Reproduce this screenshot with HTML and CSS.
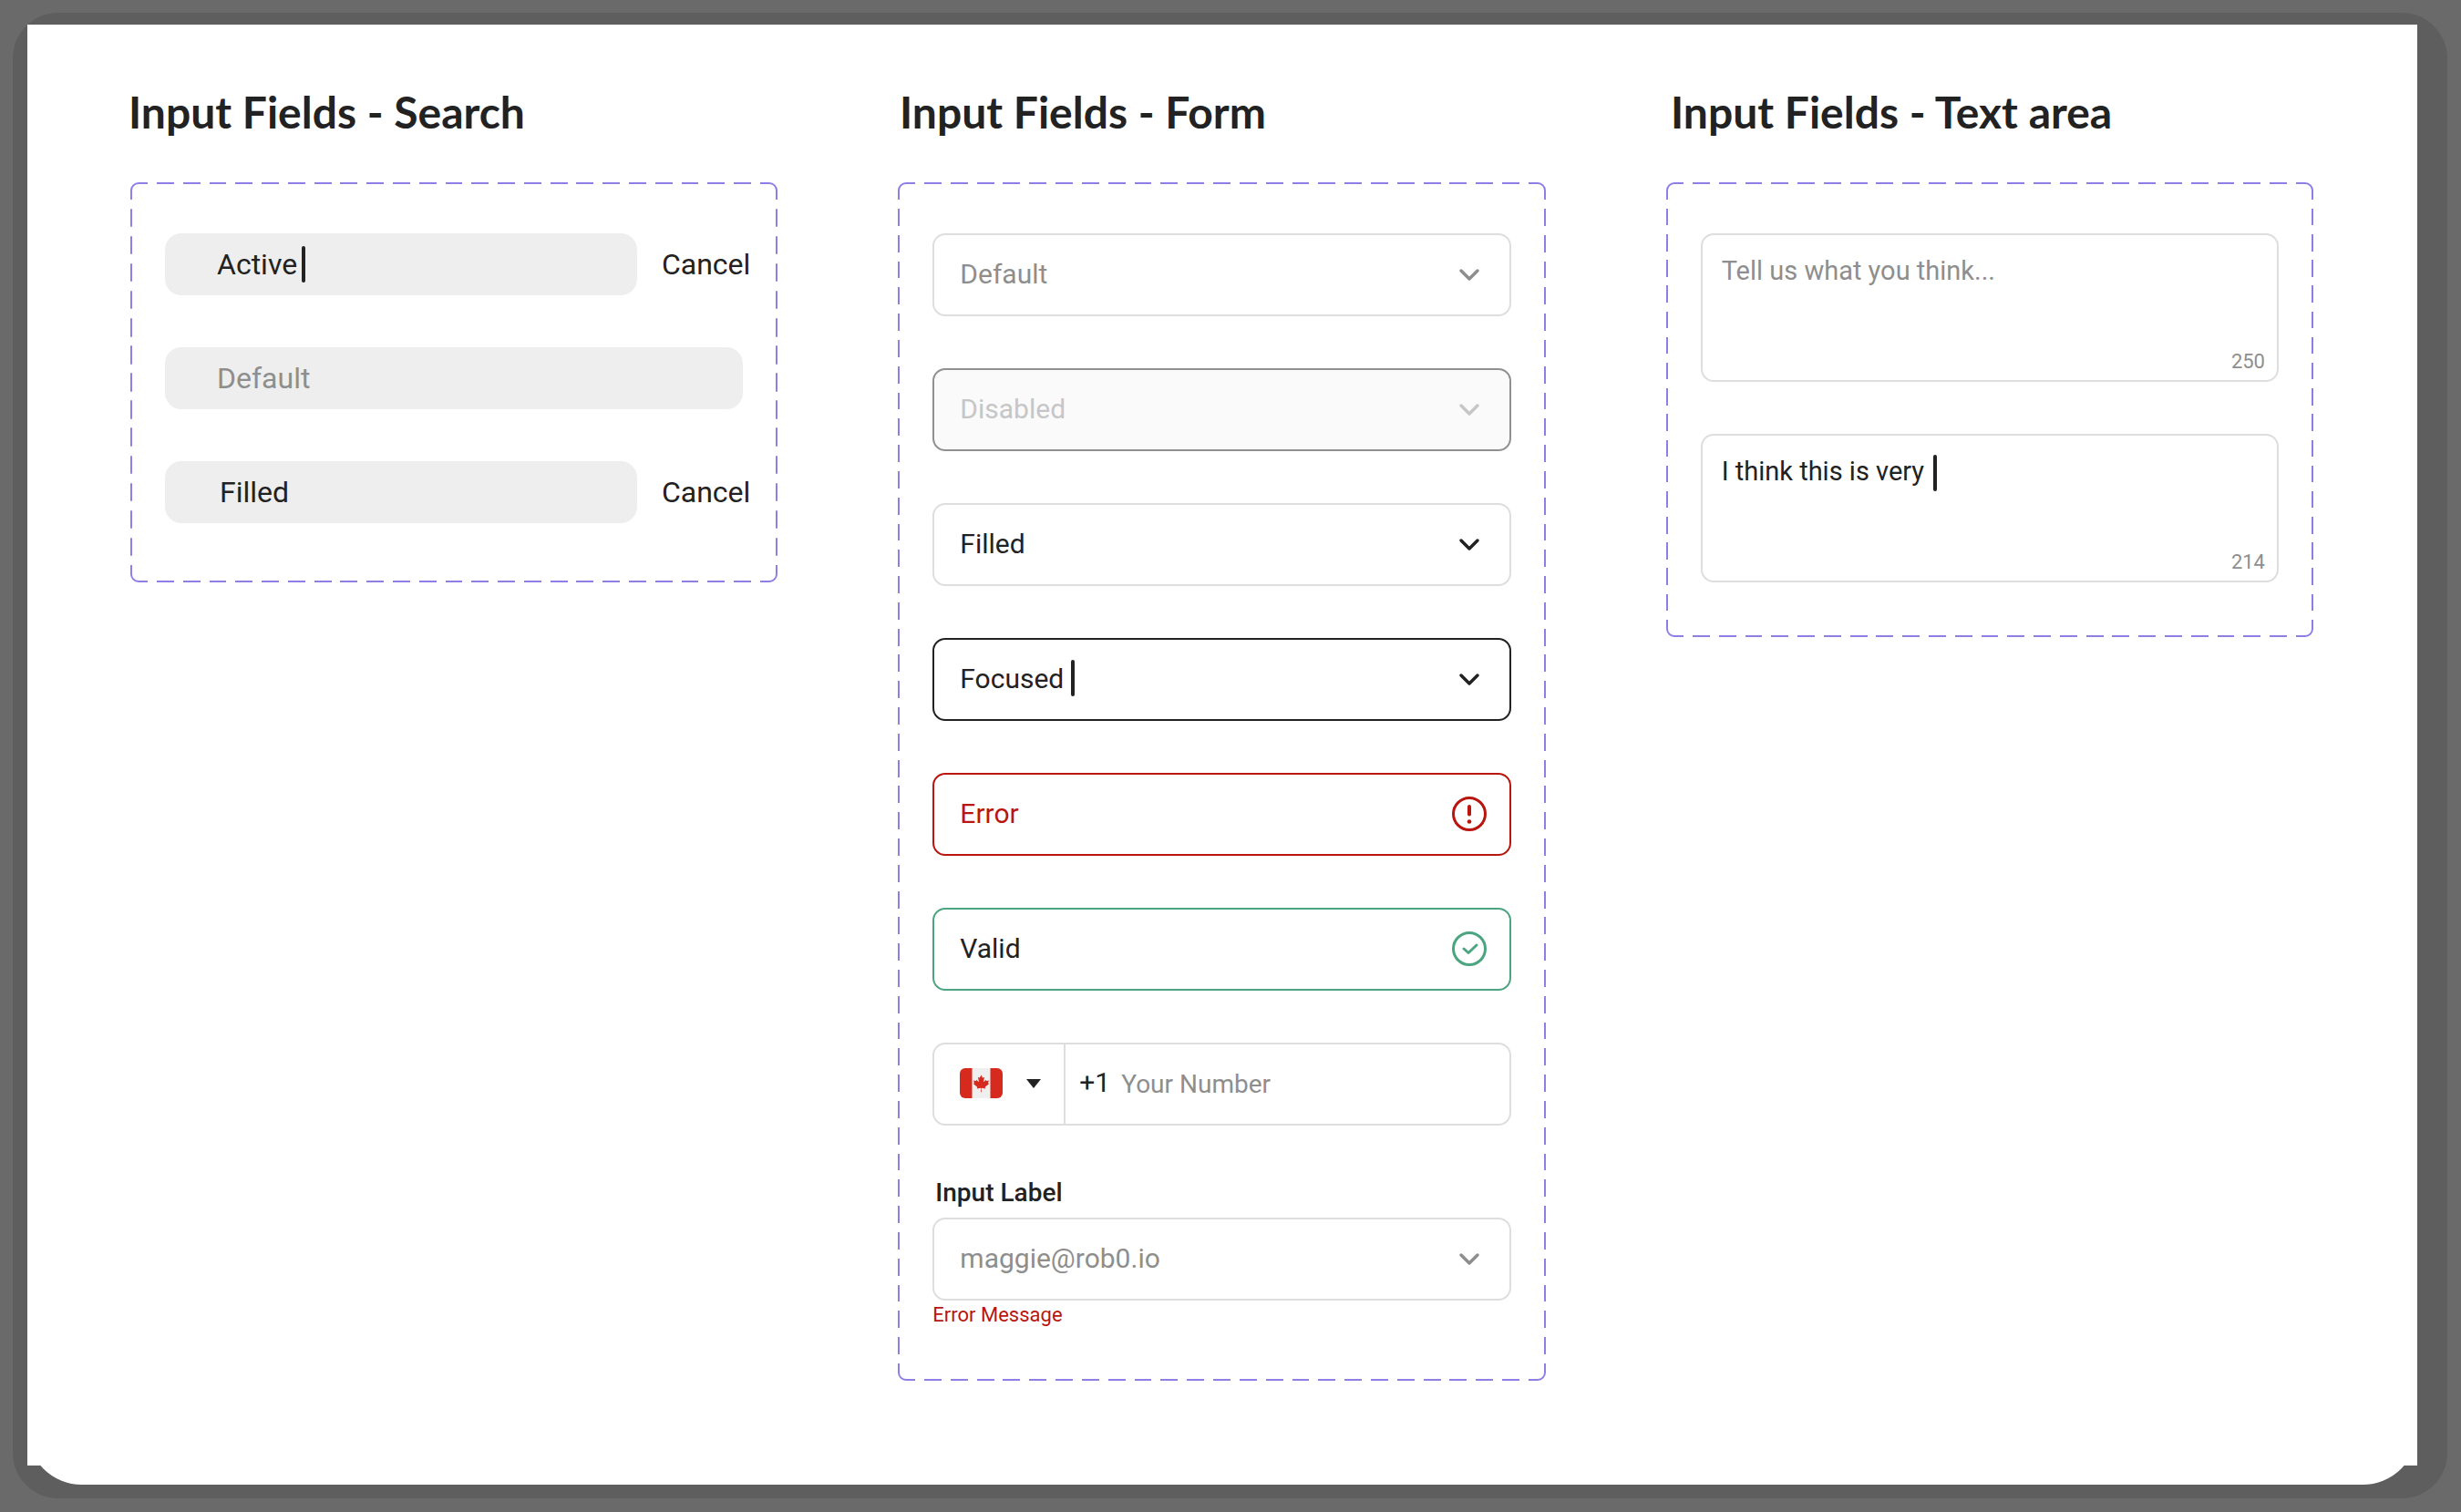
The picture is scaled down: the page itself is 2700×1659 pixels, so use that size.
FILE: index.html
```html
<!DOCTYPE html>
<html lang="en">
<head>
  <meta charset="utf-8">
  <meta name="viewport" content="width=device-width, initial-scale=1">
  <title>Input Fields</title>
  <link rel="stylesheet" href="styles.css">
</head>
<body>
  <svg class="symbols" aria-hidden="true">
    <symbol id="chevron" viewBox="0 0 40 40">
      <path d="M11 16l9 9 9-9" fill="none" stroke="currentColor" stroke-width="3.5" stroke-linecap="round" stroke-linejoin="round"/>
    </symbol>
  </svg>

  <div class="frame">
    <div class="sheet">
      <main class="page">
        <div class="titles">
          <h2 id="title-search">Input Fields - Search</h2>
          <h2 id="title-form">Input Fields - Form</h2>
          <h2 id="title-area">Input Fields - Text area</h2>
        </div>

        <div class="columns">
          <section class="panel panel-search" aria-labelledby="title-search">
            <div class="search-row">
              <div class="search">
                <input class="search-input" type="text" value="Active" aria-label="Active search">
                <span class="caret caret-search"></span>
              </div>
              <button class="cancel" type="button">Cancel</button>
            </div>
            <div class="search">
              <input class="search-input" type="text" placeholder="Default" aria-label="Default search">
            </div>
            <div class="search-row">
              <div class="search">
                <input class="search-input search-filled" type="text" value="Filled" aria-label="Filled search">
              </div>
              <button class="cancel" type="button">Cancel</button>
            </div>
          </section>

          <section class="panel panel-form" aria-labelledby="title-form">
            <div class="field field-muted">
              <select class="control" aria-label="Default field"><option>Default</option></select>
              <svg class="icon"><use href="#chevron"/></svg>
            </div>
            <div class="field field-disabled">
              <select class="control" aria-label="Disabled field" disabled><option>Disabled</option></select>
              <svg class="icon"><use href="#chevron"/></svg>
            </div>
            <div class="field">
              <select class="control" aria-label="Filled field"><option>Filled</option></select>
              <svg class="icon"><use href="#chevron"/></svg>
            </div>
            <div class="field field-focused">
              <select class="control" aria-label="Focused field"><option>Focused</option></select>
              <span class="caret caret-field"></span>
              <svg class="icon"><use href="#chevron"/></svg>
            </div>
            <div class="field field-error">
              <input class="control" type="text" value="Error" aria-label="Field with an error" aria-invalid="true">
              <svg class="icon" viewBox="0 0 40 40" aria-hidden="true">
                <circle cx="20" cy="20" r="17.5" fill="none" stroke="currentColor" stroke-width="3"/>
                <path d="M20 12v8.500" fill="none" stroke="currentColor" stroke-width="4" stroke-linecap="round"/>
                <circle cx="20" cy="28.500" r="2.300" fill="currentColor"/>
              </svg>
            </div>
            <div class="field field-valid">
              <input class="control" type="text" value="Valid" aria-label="Valid field">
              <svg class="icon" viewBox="0 0 40 40" aria-hidden="true">
                <circle cx="20" cy="20" r="17.5" fill="none" stroke="currentColor" stroke-width="3"/>
                <path d="M14 20l5 4.500 9-8.500" fill="none" stroke="currentColor" stroke-width="3" stroke-linecap="round" stroke-linejoin="round"/>
              </svg>
            </div>
            <div class="field phone">
              <button class="country" type="button" aria-label="Country: Canada">
                <svg class="flag" viewBox="0 0 47 33" aria-hidden="true">
                  <clipPath id="flag-shape"><rect width="47" height="33" rx="6"/></clipPath>
                  <g clip-path="url(#flag-shape)">
                    <rect width="47" height="33" fill="#efefef"/>
                    <rect width="13.5" height="33" fill="#d62a1e"/>
                    <rect x="33.5" width="13.5" height="33" fill="#d62a1e"/>
                    <path transform="translate(12.2 5.500) scale(.0047)" fill="#d62a1e" d="m2490 4430-45-863a95 95 0 0 1 111-98l859 151-116-320a65 65 0 0 1 20-73l941-762-212-99a65 65 0 0 1-34-79l186-572-542 115a65 65 0 0 1-73-38l-105-247-423 454a65 65 0 0 1-111-57l204-1052-327 189a65 65 0 0 1-91-27l-332-652-332 652a65 65 0 0 1-91 27l-327-189 204 1052a65 65 0 0 1-111 57l-423-454-105 247a65 65 0 0 1-73 38l-542-115 186 572a65 65 0 0 1-34 79l-212 99 941 762a65 65 0 0 1 20 73l-116 320 859-151a95 95 0 0 1 111 98l-45 863z"/>
                  </g>
                </svg>
                <svg class="triangle" viewBox="0 0 16 10" aria-hidden="true"><path d="M0 0h16l-8 10z" fill="currentColor"/></svg>
              </button>
              <label class="prefix" for="phone">+1</label>
              <input class="control phone-input" id="phone" type="tel" placeholder="Your Number">
            </div>
            <div class="group">
              <label class="group-label" for="email">Input Label</label>
              <div class="field field-muted">
                <select class="control" id="email" aria-describedby="email-error"><option>maggie@rob0.io</option></select>
                <svg class="icon"><use href="#chevron"/></svg>
              </div>
              <p class="group-error" id="email-error">Error Message</p>
            </div>
          </section>

          <section class="panel panel-area" aria-labelledby="title-area">
            <div class="area">
              <textarea class="area-input" placeholder="Tell us what you think..." aria-label="Empty feedback"></textarea>
              <span class="count">250</span>
            </div>
            <div class="area">
              <textarea class="area-input" aria-label="Feedback">I think this is very</textarea>
              <span class="caret caret-area"></span>
              <span class="count">214</span>
            </div>
          </section>
        </div>
      </main>
    </div>
  </div>
</body>
</html>
```

FILE: styles.css
```css
:root {
  --ink: #222;
  --muted: #8e8e8e;
  --line: #dedede;
  --error: #b8160f;
  --valid: #4ca581;
}

* {
  box-sizing: border-box;
}

body {
  margin: 0;
  min-height: 100vh;
  padding: 14px 15px 15px 14px;
  display: flex;
  background: #6a6a6a;
  color: var(--ink);
  font-family: Roboto, "Liberation Sans", sans-serif;
  font-size: 30px;
}

input,
select,
textarea,
button {
  margin: 0;
  padding: 0;
  border: 0;
  background: none;
  color: inherit;
  font: inherit;
  opacity: 1;
  outline: 0;
  appearance: none;
}

::placeholder {
  color: var(--muted);
  opacity: 1;
}

.symbols {
  position: absolute;
  width: 0;
  height: 0;
}

.frame {
  flex: 1;
  display: flex;
  padding: 13px 33px 15px 16px;
  border-radius: 50px;
  background: #5e5e5e;
}

/* The sheet rounds off below the square-cornered page */
.sheet {
  flex: 1;
  display: flex;
  padding-bottom: 21px;
  border-radius: 0 0 60px 60px;
  background: #fff;
}

.page {
  flex: 1;
  background: #fff;
}

.titles,
.columns {
  display: grid;
  grid-template-columns: repeat(3, 1fr);
  align-items: start;
}

.titles {
  column-gap: 136px;
  padding: 66px 109px 47px 111px;
}

h2 {
  margin: 0;
  font-family: Lato, sans-serif;
  font-size: 48px;
  font-weight: 700;
  line-height: 60px;
}

.columns {
  column-gap: 132px;
  padding: 0 114px 60px 113px;
}

.panel {
  display: flex;
  flex-direction: column;
  gap: 57px;
  padding: 54px 36px;
  border: 2px solid transparent;
  border-image: url("data:image/svg+xml,%3Csvg xmlns='http://www.w3.org/2000/svg' width='77' height='77' fill='none' stroke='%238d7fe6' stroke-width='2'%3E%3Cpath d='M1 19V9a8 8 0 0 1 8-8h10M58 1h10a8 8 0 0 1 8 8v10M76 58v10a8 8 0 0 1-8 8H58M19 76H9a8 8 0 0 1-8-8V58M29 1h19M29 76h19M1 29v19M76 29v19'/%3E%3C/svg%3E") 24 / 24px / 0 round;
}

.panel-search {
  padding-bottom: 63px;
}

.panel-area {
  padding-bottom: 58px;
}

.caret {
  position: absolute;
  width: 4px;
  height: 40px;
  border-radius: 2px;
  background: var(--ink);
}

/* Search */
.search-row {
  display: flex;
  align-items: center;
  gap: 27px;
  margin-right: -8px;
}

.search {
  position: relative;
  flex: 1;
}

.search-input {
  display: block;
  width: 100%;
  height: 68px;
  padding: 0 57px;
  border-radius: 18px;
  background: #eee;
  font-size: 32px;
}

.search-filled {
  padding-left: 60px;
}

.caret-search {
  top: 14px;
  left: 150px;
}

.cancel {
  font-size: 32px;
}

/* Form */
.field {
  position: relative;
  display: flex;
  height: 91px;
  border: 2px solid var(--line);
  border-radius: 14px;
}

.control {
  flex: 1;
  min-width: 0;
  padding: 0 80px 3px 28px;
}

.icon {
  position: absolute;
  top: 23px;
  right: 24px;
  width: 40px;
  height: 40px;
  pointer-events: none;
}

.field-muted {
  color: var(--muted);
}

.field-disabled {
  border-color: #909090;
  background: #fafafa;
  color: #c6c6c6;
}

.field-focused {
  border-color: var(--ink);
}

.caret-field {
  top: 22px;
  left: 150px;
}

.field-error {
  border-color: var(--error);
  color: var(--error);
}

.field-valid {
  border-color: var(--valid);
}

.field-valid .icon {
  color: var(--valid);
}

.country {
  display: flex;
  align-items: center;
  gap: 26px;
  padding: 0 25px 2px 28px;
  border-right: 2px solid var(--line);
}

.flag {
  width: 47px;
  height: 33px;
}

.triangle {
  width: 16px;
  height: 10px;
}

.prefix {
  padding-left: 15px;
  line-height: 84px;
}

.phone-input {
  padding: 0 16px 0 12px;
  font-size: 28px;
}

.group {
  display: flex;
  flex-direction: column;
}

.group-label {
  margin-bottom: 10px;
  padding-left: 3px;
  font-size: 28px;
  font-weight: 500;
  line-height: 34px;
}

.group-error {
  margin: 0;
  color: var(--error);
  font-size: 22px;
  line-height: 32px;
}

/* Text area */
.area {
  position: relative;
}

.area-input {
  display: block;
  width: 100%;
  height: 163px;
  padding: 21px;
  border: 2px solid var(--line);
  border-radius: 14px;
  font-size: 29px;
  line-height: 36px;
  resize: none;
}

.caret-area {
  top: 23px;
  left: 255px;
}

.count {
  position: absolute;
  right: 15px;
  bottom: 8px;
  color: var(--muted);
  font-size: 22px;
  line-height: 28px;
}
```
